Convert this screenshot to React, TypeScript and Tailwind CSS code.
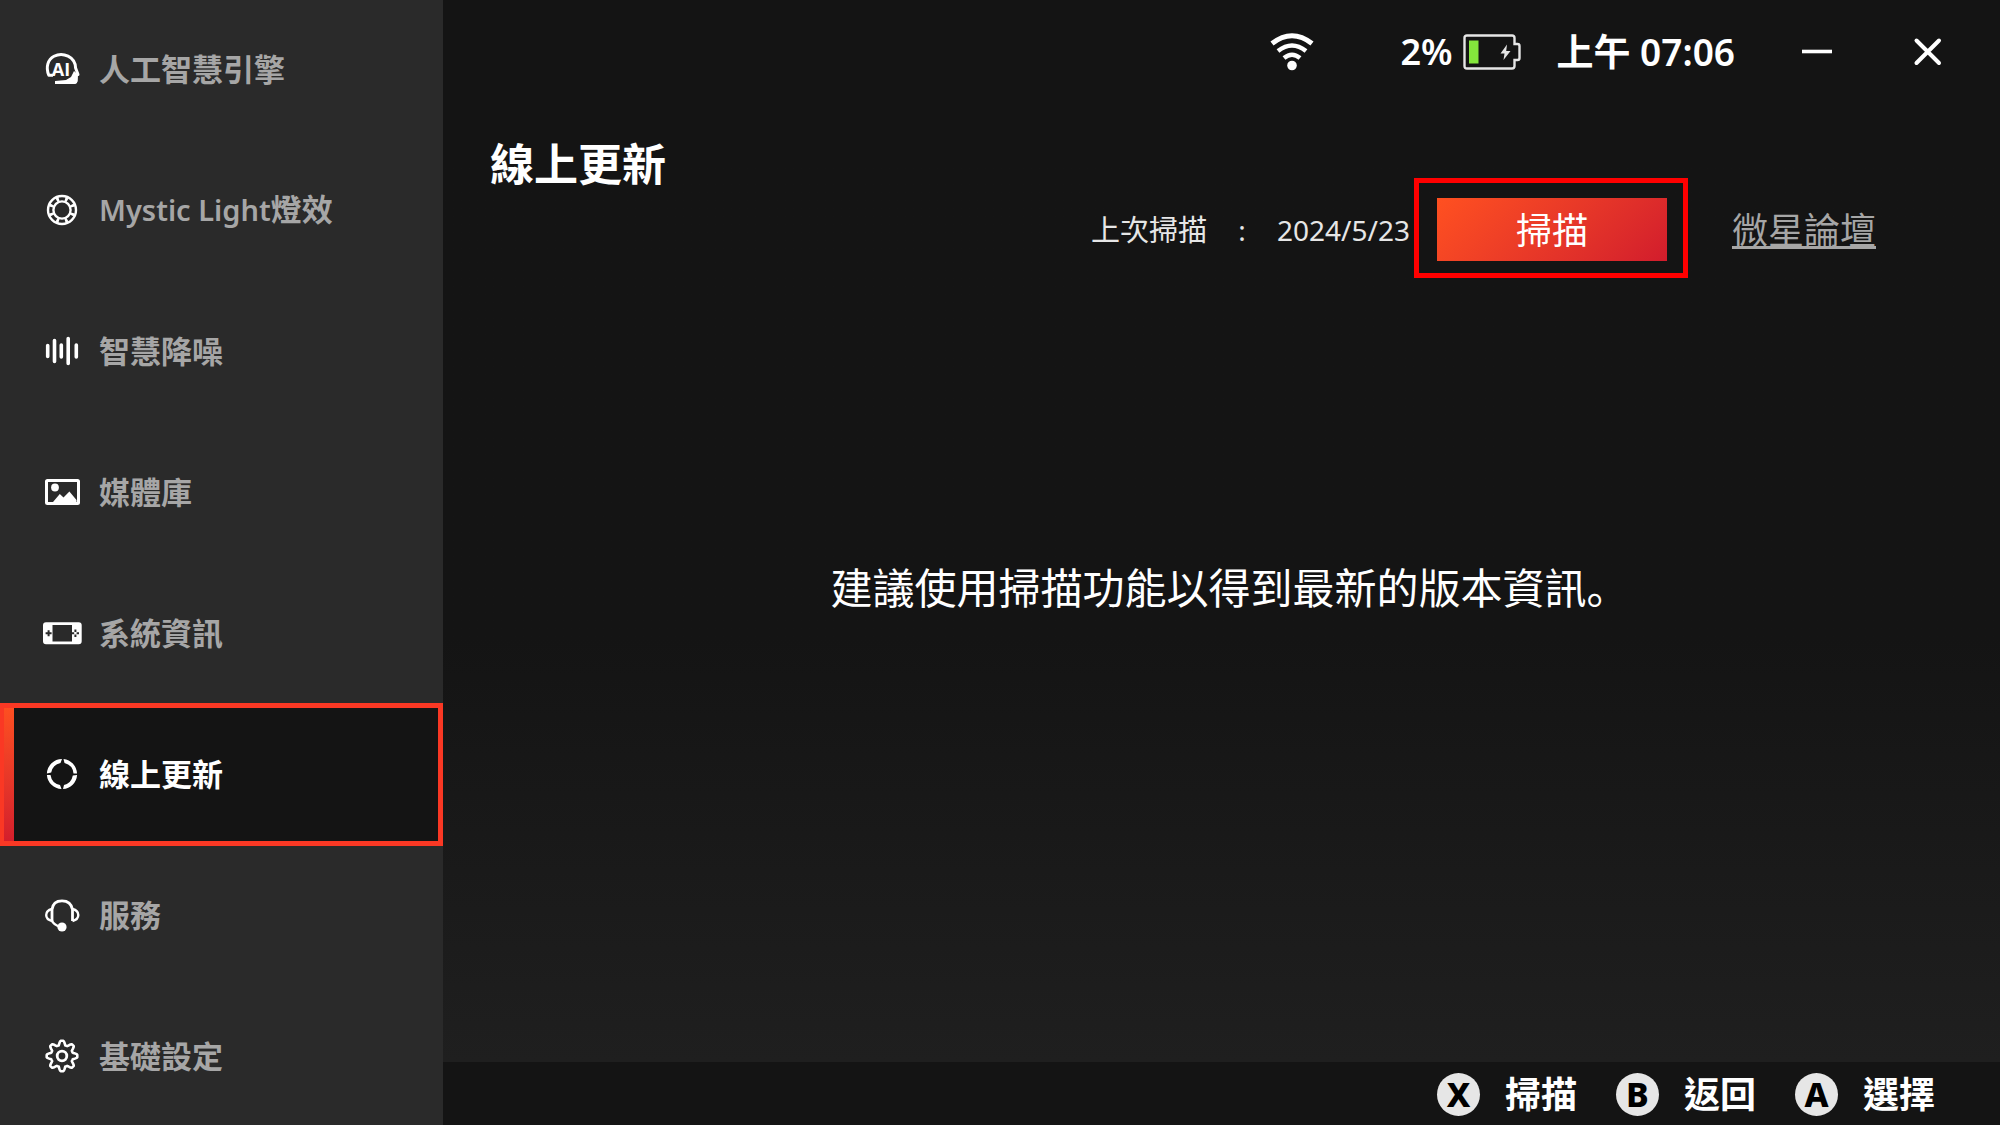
import { ReactNode, useState } from "react";

const gearPoints = Array.from({ length: 144 }, (_, i) => {
  const a = (i / 144) * Math.PI * 2;
  const wave = Math.max(-1, Math.min(1, Math.cos(a * 8) * 1.4));
  const r = 13.2 + wave * 2.1;
  return `${(20 + r * Math.sin(a)).toFixed(2)},${(20 - r * Math.cos(a)).toFixed(2)}`;
}).join(" ");

function Icon({ children }: { children: ReactNode }) {
  return (
    <svg viewBox="0 0 40 40" className="w-10 h-10 shrink-0 text-white" fill="none" stroke="currentColor" aria-hidden="true">
      {children}
    </svg>
  );
}

const icons = {
  ai: (
    <Icon>
      <path d="M11 26.200H6.800C3.400 18 6 10.500 12 7.300C21 2.600 33.200 7.800 33.600 19L36 25.500H34V31.500Q34 33.600 31.500 33.600H13.500" strokeWidth="3" strokeLinejoin="round" />
      <path d="M13 35V32L24 31L29 28L32 22L36 25.500L35.500 32Q35 35 32 35Z" fill="currentColor" stroke="none" />
      <text x="19" y="26.500" textAnchor="middle" fontSize="18" fontWeight="700" fontFamily="Open Sans, sans-serif" fill="currentColor" stroke="none">AI</text>
    </Icon>
  ),
  light: (
    <Icon>
      <circle cx="20" cy="20" r="14" strokeWidth="2.400" />
      <circle cx="20" cy="20" r="8.600" strokeWidth="2.400" />
      <circle cx="20" cy="20" r="11.300" strokeWidth="4" pathLength="80" strokeDasharray="3 7" strokeDashoffset="-3.500" />
    </Icon>
  ),
  noise: (
    <Icon>
      <path d="M5.700 14.500V25.500M12.500 9.500V30.500M19.300 14V26M26.200 7.500V32.500M34.300 14V26" strokeWidth="3.600" strokeLinecap="round" />
    </Icon>
  ),
  media: (
    <Icon>
      <rect x="4.500" y="8.500" width="32" height="23" rx="1" strokeWidth="3" />
      <circle cx="13" cy="15.500" r="3.900" fill="currentColor" stroke="none" />
      <path d="M11 30L17.800 22L21.500 25.500L27.400 19.500L34.500 28V31H11Z" fill="currentColor" stroke="none" />
    </Icon>
  ),
  system: (
    <Icon>
      <path
        fillRule="evenodd"
        d="M4 9.300H36.700Q39.700 9.300 39.700 12.300V28.300Q39.700 31.300 36.700 31.300H4Q1 31.300 1 28.300V12.300Q1 9.300 4 9.300ZM10.500 12V28.500H30V12Z"
        fill="currentColor"
        stroke="none"
      />
      <path d="M6.600 17.300V23.300M3.600 20.300H9.600" strokeWidth="2" className="text-[#2a2a2a]" stroke="currentColor" />
      <path d="M33.400 16.500V19M33.400 21.600V24M30 20.300H32.200M34.600 20.300H37" strokeWidth="2" className="text-[#2a2a2a]" stroke="currentColor" />
    </Icon>
  ),
  update: (
    <Icon>
      <path d="M21.500 4.900A15.200 15.200 0 0 1 35 19.500L31.500 19.500A12 12 0 0 0 22.500 9Z" fill="currentColor" stroke="none" />
      <path d="M35.100 21A15.200 15.200 0 0 1 21 35.100L22 31A12 12 0 0 0 30.800 21.500Z" fill="currentColor" stroke="none" />
      <path d="M19.500 35.100A15.200 15.200 0 0 1 4.900 21L8.500 21A12 12 0 0 0 18 31Z" fill="currentColor" stroke="none" />
      <path d="M4.900 19.500A15.200 15.200 0 0 1 20 4.900L18.500 9A12 12 0 0 0 9.200 18.500Z" fill="currentColor" stroke="none" />
    </Icon>
  ),
  service: (
    <Icon>
      <path d="M10 26V14.500Q11 5.800 20 5.800T30.500 14.500V26" strokeWidth="2.800" />
      <path d="M10 14Q4.200 15.500 4.200 20T10 26" strokeWidth="2.400" />
      <path d="M30.500 14Q36.300 15.500 36.300 20T30.500 26" strokeWidth="2.400" />
      <path d="M9.500 25Q12 30.500 19 32" strokeWidth="2.400" />
      <circle cx="20" cy="32" r="4.600" fill="currentColor" stroke="none" />
    </Icon>
  ),
  settings: (
    <Icon>
      <polygon points={gearPoints} strokeWidth="2.600" strokeLinejoin="round" />
      <circle cx="20" cy="20" r="4.800" strokeWidth="2.800" />
    </Icon>
  ),
};

const menu = [
  { id: "ai", latin: "", label: "人工智慧引擎" },
  { id: "light", latin: "Mystic Light", label: "燈效" },
  { id: "noise", latin: "", label: "智慧降噪" },
  { id: "media", latin: "", label: "媒體庫" },
  { id: "system", latin: "", label: "系統資訊" },
  { id: "update", latin: "", label: "線上更新" },
  { id: "service", latin: "", label: "服務" },
  { id: "settings", latin: "", label: "基礎設定" },
] as const;

const hints = [
  { key: "X", label: "掃描" },
  { key: "B", label: "返回" },
  { key: "A", label: "選擇" },
];

export default function App() {
  const [active, setActive] = useState<string>("update");

  return (
    <div className="flex h-screen overflow-hidden bg-[#141414] text-white font-['Noto_Sans','Noto_Sans_CJK_TC',sans-serif]">
      {/* Sidebar */}
      <nav className="w-[443px] shrink-0 flex flex-col bg-[#2a2a2a]">
        {menu.map((item) => (
          <button
            key={item.id}
            onClick={() => setActive(item.id)}
            className={
              "relative shrink-0 flex items-center gap-[17px] pl-[42px] pb-0.5 text-[31px] leading-10 text-left font-bold " +
              (active === item.id
                ? "h-[143px] -my-px bg-[#141414] text-white"
                : "h-[141px] first:h-[140px] text-[#a6a6a6]")
            }
          >
            {active === item.id && (
              <>
                <span className="absolute inset-y-0 left-0 w-[14px] bg-linear-to-b from-[#ff5020] to-[#d21c2c]" />
                <span className="absolute inset-0 border-[5px] border-l-4 border-[#fa3824]" />
              </>
            )}
            {icons[item.id]}
            <span>
              {item.latin && <span className="text-[29px] font-semibold">{item.latin}</span>}
              {item.label}
            </span>
          </button>
        ))}
      </nav>

      <div className="flex-1 min-w-0 flex flex-col">
        <main className="flex-1 min-h-0 flex flex-col bg-linear-to-b from-[#141414] from-60% to-[#1f1f1f]">
          {/* Status bar */}
          <header className="h-[104px] shrink-0 flex items-center justify-end pr-[53px] text-[36px] leading-[48px] font-semibold">
            <svg viewBox="0 0 44 38" className="w-11 h-[38px] mr-[86px]" fill="none" stroke="currentColor" aria-label="Wi-Fi">
              <path d="M2 10.500Q22 -5 42 10.500" strokeWidth="5" />
              <path d="M8 18Q22 7 36 18" strokeWidth="4.500" />
              <path d="M14 25Q22 18.500 30 25" strokeWidth="4.500" />
              <circle cx="22" cy="32.500" r="4.800" fill="currentColor" stroke="none" />
            </svg>
            <span>2%</span>
            <svg viewBox="0 0 58 36" className="w-[58px] h-9 ml-2.5 mr-9" fill="none" aria-label="Battery">
              <path d="M4 1.500H49Q51.500 1.500 51.500 4V10H54.500Q56.500 10 56.500 12V24Q56.500 26 54.500 26H51.500V32Q51.500 34.500 49 34.500H4Q1.500 34.500 1.500 32V4Q1.500 1.500 4 1.500Z" stroke="#e6e6e6" strokeWidth="2.400" />
              <rect x="6" y="6.500" width="9.500" height="23" fill="#84e63c" />
              <path d="M44 10.500L37.500 19.500H41.500L40.500 26L47.500 17H43.200Z" fill="#e6e6e6" />
            </svg>
            <span className="text-[37px]">上午 07:06</span>
            <button aria-label="Minimize" className="ml-[62px]">
              <svg viewBox="0 0 40 40" className="w-10 h-10" stroke="currentColor" strokeWidth="3.600">
                <path d="M5 19.500H35" />
              </svg>
            </button>
            <button aria-label="Close" className="ml-[70px]">
              <svg viewBox="0 0 40 40" className="w-10 h-10" stroke="currentColor" strokeWidth="4" strokeLinecap="round">
                <path d="M9.500 8.500L32 31M32 8.500L9.500 31" />
              </svg>
            </button>
          </header>

          <div className="shrink-0 flex items-start justify-between pl-[47px] pr-[124px]">
            <h1 className="mt-[30px] text-[44px] leading-[60px] font-bold">線上更新</h1>

            <div className="mt-[74px] flex items-center">
              <span className="pt-1 text-[29px] leading-10 text-[#e6e6e6]">上次掃描</span>
              <span className="w-[70px] pt-1 text-center text-[28px] leading-10 text-[#e6e6e6]">:</span>
              <span className="mr-1 pt-1 text-[28px] leading-10 text-[#e6e6e6]">2024/5/23</span>
              <div className="border-[5px] border-[#ff0000] pt-[15px] pb-3 pl-[18px] pr-4">
                <button className="block w-[230px] h-[63px] pt-0.5 bg-linear-135 from-[#ff5020] to-[#d21c2c] text-[36px] leading-[61px]">
                  掃描
                </button>
              </div>
              <a href="#" className="ml-11 pt-1.5 text-[36px] leading-[48px] text-[#a6a6a6] underline decoration-3 underline-offset-2">
                微星論壇
              </a>
            </div>
          </div>

          <div className="flex-1 flex items-center justify-center pb-[166px] pl-4">
            <p className="text-[42px] leading-[60px]">
              建議使用掃描功能以得到最新的版本資訊
              <span lang="ja" className="font-['Noto_Sans_CJK_JP',sans-serif]">。</span>
            </p>
          </div>
        </main>

        {/* Controller hints */}
        <footer className="h-[63px] shrink-0 flex items-center justify-end gap-[39px] pt-0.5 pr-[65px]">
          {hints.map((hint) => (
            <button key={hint.key} className="flex items-center gap-[25px] text-[36px] leading-[48px] font-bold">
              <span className="w-[43px] h-[43px] rounded-full bg-[#e6e6e6] text-black text-[34px] leading-[43px] font-extrabold text-center">
                {hint.key}
              </span>
              {hint.label}
            </button>
          ))}
        </footer>
      </div>
    </div>
  );
}
